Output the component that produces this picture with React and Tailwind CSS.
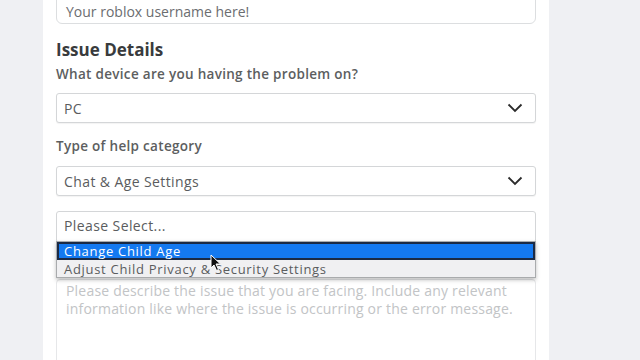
import React from "react";

const font = { fontFamily: '"Open Sans", "Noto Sans", Arial, sans-serif' };

function Chevron() {
  return (
    <svg width="16" height="10" viewBox="0 0 16 10" className="shrink-0">
      <polyline points="1.5,1.5 8,8 14.5,1.5" fill="none" stroke="#2b2b2b" strokeWidth="1.8" />
    </svg>
  );
}

function SelectBox({ value }) {
  return (
    <div className="h-[30px] border border-[#d4d6d8] rounded-[3px] bg-white flex items-center justify-between pl-[7px] pr-[12px] shadow-[0_1px_1px_rgba(0,0,0,0.05)]">
      <span className="text-[14px] tracking-[0.4px] text-[#5a5c5e]">{value}</span>
      <Chevron />
    </div>
  );
}

function Cursor() {
  return (
    <svg width="12" height="18" viewBox="0 0 12 18" className="absolute left-[153px] top-[12px]">
      <path d="M1 1 L1 14 L4 11 L6.5 16.5 L8.5 15.5 L6 10 L10.5 10 Z" fill="#111" stroke="#fff" strokeWidth="1" />
    </svg>
  );
}

export default function App() {
  return (
    <div className="h-[360px] w-[640px] overflow-hidden bg-[#eff0f3] flex pl-[43px]" style={font}>
      <div className="w-[506px] bg-white px-[13px]">
        {/* username input */}
        <div className="h-[36px] mt-[-12px] border border-[#dcdee0] rounded-[6px] flex items-center pt-[10px] px-[9px]">
          <span className="text-[14px] text-[#6b6d70]">Your roblox username here!</span>
        </div>

        {/* Issue Details */}
        <h2 className="mt-[15px] text-[17px] leading-[22px] font-bold text-[#393b3d]">Issue Details</h2>
        <p className="mt-[4px] text-[13.5px] leading-[18px] tracking-[0.3px] font-semibold text-[#5c5e60]">
          What device are you having the problem on?
        </p>
        <div className="mt-[10px]">
          <SelectBox value="PC" />
        </div>

        <p className="mt-[14px] text-[13.5px] leading-[18px] tracking-[0.3px] font-semibold text-[#5c5e60]">Type of help category</p>
        <div className="mt-[11px]">
          <SelectBox value="Chat & Age Settings" />
        </div>

        {/* subcategory with open list */}
        <div className="relative mt-[15px]">
          <div className="h-[32px] border border-[#d4d6d8] rounded-[3px] bg-white flex items-start pt-[5px] pl-[7px]">
            <span className="text-[14px] leading-[18px] tracking-[0.4px] text-[#5a5c5e]">Please Select...</span>
          </div>
          <div className="absolute left-0 right-0 top-[30px] border border-[#a9abad] bg-[#f0f0f2] shadow-[0_2px_4px_rgba(0,0,0,0.25)]">
            <div className="h-[18px] bg-[#1479f0] border-2 border-[#1b2a44] pl-[5px] flex items-center">
              <span className="text-[13px] tracking-[0.7px] leading-[14px] text-white">Change Child Age</span>
            </div>
            <div className="h-[17px] pl-[7px] flex items-center">
              <span className="text-[13px] tracking-[0.7px] leading-[16px] text-[#5a5c5e]">Adjust Child Privacy &amp; Security Settings</span>
            </div>
            <Cursor />
          </div>
        </div>

        {/* description */}
        <div className="mt-[36px] h-[120px] border border-[#e6e7e9] rounded-[4px] px-[9px] pt-[2px]">
          <p className="text-[14px] leading-[18px] tracking-[0.2px] text-[#c2c4c6]">
            Please describe the issue that you are facing. Include any relevant information like where the issue is occurring or the error message.
          </p>
        </div>
      </div>
    </div>
  );
}
